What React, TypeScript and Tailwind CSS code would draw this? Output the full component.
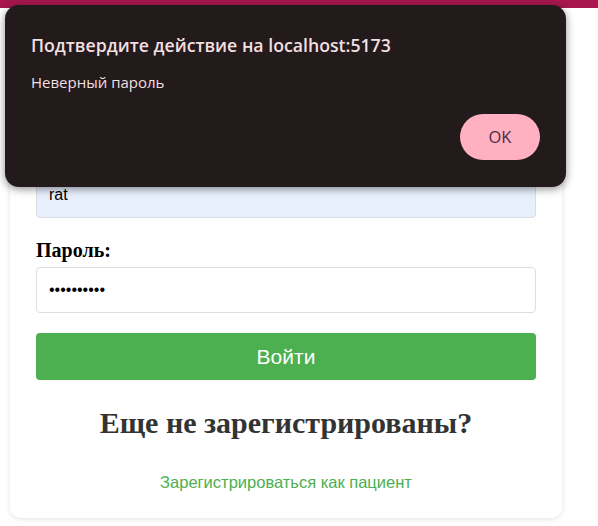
import { useState } from "react";

function ConfirmDialog() {
  return (
    <div className="absolute left-[5px] top-[5px] w-[561px] h-[182px] rounded-[14px] bg-[#231a1b] shadow-[0_2px_8px_rgba(0,0,0,0.45)] px-[26px] pt-[29px] font-['Open_Sans',sans-serif]">
      <h1 className="text-[17.7px] leading-[22px] font-semibold text-[#f2dfe0]">
        Подтвердите действие на localhost:5173
      </h1>
      <p className="mt-[16px] text-[15px] leading-[20px] text-[#f2dfe0]">
        Неверный пароль
      </p>
      <div className="flex justify-end mt-[22px]">
        <button className="w-[80px] h-[46px] rounded-full bg-[#ffb0c1] text-[16.5px] text-[#4b2b48]">
          OK
        </button>
      </div>
    </div>
  );
}

export default function App() {
  const [login, setLogin] = useState("rat");
  const [password, setPassword] = useState("1234567890");

  return (
    <div className="relative min-h-[526px] bg-white">
      <div className="h-[8px] bg-[#a8174f]" />

      <div className="mx-[10px] mt-[12px] w-[552px] rounded-[10px] bg-white px-[26px] pt-[123px] pb-[26px] shadow-[0_1px_5px_rgba(0,0,0,0.12)]">
        <label className="block font-['Liberation_Serif',serif] font-bold text-[20px] leading-[24px] text-black">
          Логин:
        </label>
        <input
          value={login}
          onChange={(e) => setLogin(e.target.value)}
          className="mt-[5px] block w-full h-[46px] rounded-[4px] border border-[#d9dce3] bg-[#e8f0fe] px-[12px] font-['Liberation_Sans',sans-serif] text-[16px] text-black outline-none"
        />

        <label className="mt-[20px] block font-['Liberation_Serif',serif] font-bold text-[20px] leading-[24px] text-black">
          Пароль:
        </label>
        <input
          type="password"
          value={password}
          onChange={(e) => setPassword(e.target.value)}
          className="mt-[5px] block w-full h-[46px] rounded-[4px] border border-[#dddddd] bg-white px-[12px] font-['Liberation_Sans',sans-serif] text-[16px] text-black outline-none"
        />

        <button className="mt-[20px] block w-full h-[47px] rounded-[4px] bg-[#4caf50] font-['Liberation_Sans',sans-serif] text-[21px] text-white">
          Войти
        </button>

        <h2 className="mt-[26px] text-center font-['Liberation_Serif',serif] font-bold text-[30px] leading-[34px] text-[#333]">
          Еще не зарегистрированы?
        </h2>

        <div className="mt-[32px] text-center leading-[20px]">
          <a
            href="#"
            className="font-['Liberation_Sans',sans-serif] text-[16.5px] text-[#4caf50]"
          >
            Зарегистрироваться как пациент
          </a>
        </div>
      </div>

      <ConfirmDialog />
    </div>
  );
}
